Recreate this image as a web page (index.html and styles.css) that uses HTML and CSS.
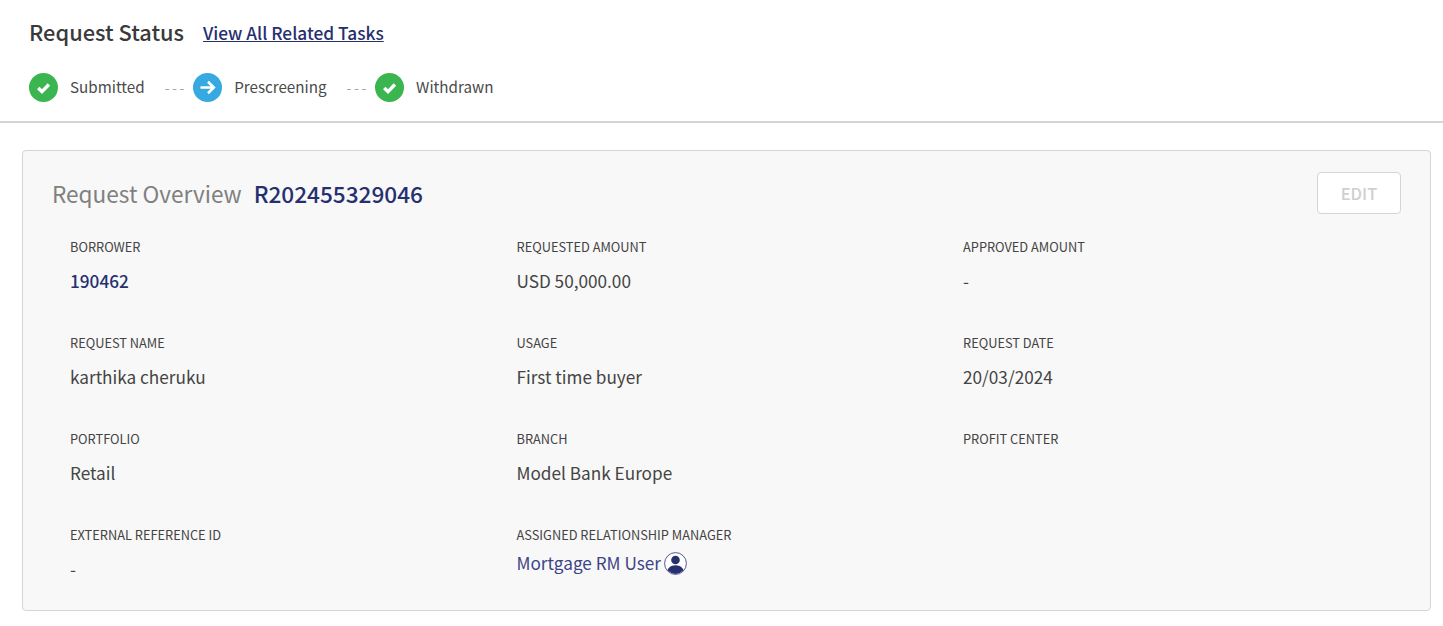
FILE: index.html
```html
<!DOCTYPE html>
<html lang="en">
<head>
<meta charset="utf-8">
<title>Request Status</title>
<link rel="stylesheet" href="styles.css">
</head>
<body>
<header class="status">
  <div class="status-title">
    <h1>Request Status</h1>
    <a class="tasks-link" href="#">View All Related Tasks</a>
  </div>
  <ol class="steps">
    <li class="step">
      <svg class="step-icon" viewBox="0 0 29 29"><circle cx="14.5" cy="14.5" r="14.5" fill="#3ab54f"/><path d="M9.2 15l3.8 3.6 6.9-7.1" fill="none" stroke="#fff" stroke-width="3.4"/></svg>
      <span class="step-label">Submitted</span>
    </li>
    <li class="sep">---</li>
    <li class="step">
      <svg class="step-icon" viewBox="0 0 29 29"><circle cx="14.5" cy="14.5" r="14.5" fill="#36a9e1"/><path d="M7.5 14.5h13M15 8.8l5.8 5.7-5.8 5.7" fill="none" stroke="#fff" stroke-width="2.6"/></svg>
      <span class="step-label">Prescreening</span>
    </li>
    <li class="sep">---</li>
    <li class="step">
      <svg class="step-icon" viewBox="0 0 29 29"><circle cx="14.5" cy="14.5" r="14.5" fill="#3ab54f"/><path d="M9.2 15l3.8 3.6 6.9-7.1" fill="none" stroke="#fff" stroke-width="3.4"/></svg>
      <span class="step-label">Withdrawn</span>
    </li>
  </ol>
</header>
<main class="card">
  <div class="card-head">
    <h2><span class="card-title">Request Overview</span><span class="card-id">R202455329046</span></h2>
    <button class="edit" disabled>EDIT</button>
  </div>
  <dl class="fields">
    <div class="field"><dt>BORROWER</dt><dd class="strong-link">190462</dd></div>
    <div class="field"><dt>REQUESTED AMOUNT</dt><dd>USD 50,000.00</dd></div>
    <div class="field"><dt>APPROVED AMOUNT</dt><dd>-</dd></div>
    <div class="field"><dt>REQUEST NAME</dt><dd>karthika cheruku</dd></div>
    <div class="field"><dt>USAGE</dt><dd>First time buyer</dd></div>
    <div class="field"><dt>REQUEST DATE</dt><dd>20/03/2024</dd></div>
    <div class="field"><dt>PORTFOLIO</dt><dd>Retail</dd></div>
    <div class="field"><dt>BRANCH</dt><dd>Model Bank Europe</dd></div>
    <div class="field"><dt>PROFIT CENTER</dt><dd></dd></div>
    <div class="field"><dt>EXTERNAL REFERENCE ID</dt><dd>-</dd></div>
    <div class="field"><dt>ASSIGNED RELATIONSHIP MANAGER</dt>
      <dd class="manager"><span>Mortgage RM User</span>
        <svg class="user-icon" viewBox="0 0 23 23"><defs><clipPath id="uc"><circle cx="11.5" cy="11.5" r="10.4"/></clipPath></defs><circle cx="11.5" cy="11.5" r="10.9" fill="#fff" stroke="#26306f" stroke-width="0.8"/><g clip-path="url(#uc)" fill="#26306f"><circle cx="11.5" cy="8" r="4.3"/><path d="M2.5 23c0-6.5 3.6-9.8 9-9.8s9 3.3 9 9.8z"/></g></svg>
      </dd></div>
  </dl>
</main>
</body>
</html>
```
FILE: styles.css
```css
* { box-sizing: border-box; }
html, body { margin: 0; padding: 0; }
body {
  background: #fff;
  color: #444;
  font-family: "Noto Sans CJK SC", "Noto Sans", sans-serif;
  height: 626px;
  overflow: hidden;
}
h1, h2, dl, dd, dt, ol { margin: 0; padding: 0; }
.status {
  height: 123px;
  border-bottom: 2px solid #d5d5d5;
  padding: 17px 29px 0;
}
.status-title {
  display: flex;
  align-items: center;
  height: 30px;
}
h1 {
  font-size: 21.8px;
  font-weight: 500;
  line-height: 30px;
  color: #3a3a3a;
}
.tasks-link {
  margin-left: 19px;
  padding-top: 2px;
  font-size: 17.3px;
  font-weight: 500;
  line-height: 30px;
  color: #26306f;
  text-decoration: underline;
}
.steps {
  list-style: none;
  display: flex;
  align-items: center;
  margin-top: 25px;
  height: 30px;
  font-size: 15.2px;
  color: #4a4a4a;
}
.step { display: flex; align-items: center; }
.step-icon { width: 29px; height: 29px; margin-right: 12px; flex: none; }
.step-label { white-space: nowrap; margin-bottom: 2px; }
.sep {
  color: #9aa5b1;
  font-size: 14px;
  letter-spacing: 2.6px;
  white-space: nowrap;
  margin: 0 8px 0 20px;
  width: 20.5px;
}
.card {
  margin: 27px 12px 0 22px;
  height: 461px;
  background: #f8f8f8;
  border: 1px solid #d5d5d5;
  border-radius: 4px;
  padding: 21px 29px 0;
}
.card-head {
  display: flex;
  justify-content: space-between;
  align-items: center;
  height: 42px;
}
h2 { font-weight: 400; font-size: 22.6px; line-height: 42px; padding-top: 1px; }
.card-title { color: #808080; }
.card-id { color: #26306f; font-weight: 500; margin-left: 12px; }
.edit {
  width: 84px;
  height: 42px;
  background: #fff;
  border: 1px solid #d5d5d5;
  border-radius: 4px;
  color: #cfcfcf;
  font: 500 16.5px "Noto Sans CJK SC", sans-serif;
}
.fields {
  display: grid;
  grid-template-columns: repeat(3, 446.5px);
  grid-auto-rows: 96px;
  padding: 24px 0 0 18px;
}
dt { font-size: 12.8px; line-height: 18px; color: #444; }
dd { font-size: 17.2px; line-height: 24px; margin-top: 13px; color: #444; }
.strong-link { color: #26306f; font-weight: 500; }
.manager { display: flex; align-items: center; gap: 4px; margin-top: 7px; color: #3d4586; }
.user-icon { width: 23px; height: 23px; flex: none; margin-left: -0.5px; }
```
